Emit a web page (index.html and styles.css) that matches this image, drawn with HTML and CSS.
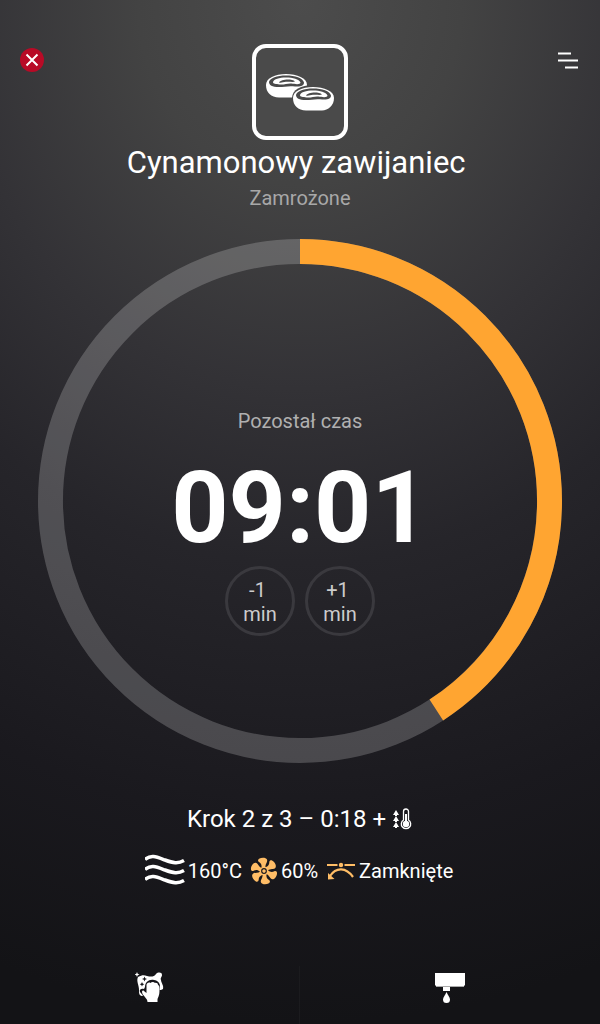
FILE: index.html
```html
<!DOCTYPE html>
<html lang="pl">
<head>
    <meta charset="UTF-8">
    <meta name="viewport" content="width=device-width, initial-scale=1.0">
    <title>Cynamonowy zawijaniec</title>
    <link rel="stylesheet" href="styles.css">
</head>
<body>
    <header class="header">
        <button class="icon-btn close-btn" type="button" aria-label="Zamknij">
            <svg width="24" height="24" viewBox="0 0 24 24">
                <circle cx="12" cy="12" r="12" fill="#b80a26"/>
                <path d="M6.5 6.5l11 11M17.5 6.5l-11 11" stroke="#fff" stroke-width="2"/>
            </svg>
        </button>
        <div class="product-icon">
            <svg width="70" height="38" viewBox="0 0 70 38">
                <g id="bun">
                    <path d="M1 12C1 5 10 1 21 1s21 4 21 11c0 8-6 12-12 12.500H14C6 24 1 20 1 12z" fill="#fff"/>
                    <path d="M4 9C5 5 12 2.500 21 2.500S38 5 39 9.500c0 3-3 4.500-9 4-6-1-11 .5-16 .5-7 0-10-2-10-5z" fill="#4a4a4a"/>
                    <path d="M8 9c1-3 6-4.500 13-4.500S34 6 35.500 9.500c0 2.500-6 1.500-9 1-4-.5-7 1.500-12 1C11 11 8 11 8 9z" fill="#fff"/>
                    <path d="M14 9.500C16 6 27 5.500 30 8.500c-2 1-6-.2-9 .3s-5 1.200-7 .7z" fill="#4a4a4a"/>
                </g>
                <path d="M27 25C27 17 36 12 48 12s22 5 22 13c0 9-6 13-12 13H41c-8 0-14-5-14-13z" fill="#4a4a4a"/>
                <use href="#bun" x="27" y="13"/>
            </svg>
        </div>
        <button class="icon-btn menu-btn" type="button" aria-label="Menu">
            <svg width="20" height="24" viewBox="0 0 20 24">
                <path d="M0 5.500h13M0 12.500h20M7 19.500h13" stroke="#fff" stroke-width="2"/>
            </svg>
        </button>
    </header>

    <main class="main">
        <h1 class="title">Cynamonowy zawijaniec&nbsp;</h1>
        <p class="subtitle">Zamrożone</p>

        <section class="timer">
            <svg class="timer-ring" viewBox="0 0 525 525">
                <circle class="ring-track" cx="262.5" cy="262.5" r="250"/>
                <circle class="ring-value" cx="262.5" cy="262.5" r="250" pathLength="1000" stroke-dasharray="408 1000" transform="rotate(-90 262.5 262.5)"/>
            </svg>
            <div class="timer-content">
                <p class="timer-label">Pozostał czas</p>
                <p class="timer-time">09:01</p>
                <div class="timer-buttons">
                    <button class="round-btn" type="button">-1&nbsp;<br>min</button>
                    <button class="round-btn" type="button">+1&nbsp;<br>min</button>
                </div>
            </div>
        </section>

        <p class="step">
            Krok 2 z 3 – 0:18 +
            <svg width="20" height="22" viewBox="0 0 20 22">
                <path d="M0 7l3-5 3 5zM2 7h2v1H2zM0 13l3-5 3 5zM2 13h2v1H2zM0 19l3-5 3 5zM2 19h2v1H2z" fill="#fff"/>
                <path d="M10.500 12V3.500a2.500 2.500 0 0 1 5 0V12a4.700 4.700 0 1 1-5 0z" fill="none" stroke="#fff" stroke-width="1.300"/>
                <circle cx="13" cy="16" r="3.200" fill="#fff"/>
                <path d="M13 6v10" stroke="#fff" stroke-width="2"/>
            </svg>
        </p>

        <ul class="params">
            <li>
                <svg width="40" height="34" viewBox="1 0 40 34">
                    <g fill="none" stroke="#fff" stroke-width="3.500">
                        <path d="M1 5.500C7 0 13 3 21 6s13 4 19 .5"/>
                        <path d="M1 15.500c6-5.500 12-2.500 20 .5s13 4 19 .5"/>
                        <path d="M1 25.500c6-5.500 12-2.500 20 .5s13 4 19 .5"/>
                    </g>
                </svg>
                160°C
            </li>
            <li>
                <svg width="28" height="28" viewBox="-14 -14 28 28">
                    <g fill="#ffbd66">
                        <path id="blade" d="M-2.500-3C-2-6-3-8-5-9c-1.500-1-1-2.500 0-3.200C-2-14 2-13.500 3-11.500 4-9 1-7 1.500-3.500z"/>
                        <use href="#blade" transform="rotate(60)"/>
                        <use href="#blade" transform="rotate(120)"/>
                        <use href="#blade" transform="rotate(180)"/>
                        <use href="#blade" transform="rotate(240)"/>
                        <use href="#blade" transform="rotate(300)"/>
                        <circle r="4.200"/>
                    </g>
                    <circle r="2.300" fill="none" stroke="#1c1b20" stroke-width="1.200"/>
                </svg>
                60%
            </li>
            <li>
                <svg width="30" height="20" viewBox="0 0 30 20">
                    <path d="M1 4h10.500M18.500 4H29" stroke="#ffbd66" stroke-width="2"/>
                    <circle cx="15" cy="4" r="2.200" fill="#ffbd66"/>
                    <path d="M4 15C10 6 20 6 27 16" fill="none" stroke="#ffbd66" stroke-width="2.200"/>
                    <path d="M2 12v6.500l6.500-.5z" fill="#ffbd66"/>
                </svg>
                Zamknięte
            </li>
        </ul>
    </main>

    <footer class="footer">
        <button class="footer-btn" type="button" aria-label="Czyszczenie">
            <svg width="30" height="32" viewBox="0 0 30 32">
                <path d="M3 5c4-2 6-2 9-1 4 1 7 1 9-2 2-2 6-2 6 1 0 2-2 3-1 5 0 3 3 5 2 9-1 1-3 1-5 1L9 19c-1 2 0 5-2 5-3-.5-3-3-3-6 0-5-3-9-1-13z" fill="#fff"/>
                <path d="M10 15c0-5 4-8 9-7 4 .5 6 3 6 7l-1 9-1.500 7H12l-1-4-6-7c-1-2 1-4 4-3z" fill="#151418"/>
                <path d="M12.500 30c0-4-5-6-5.500-10 0-1.800 1.800-2 2.500-.5l2 1.500V13c0-2 2.500-3 4-2 1-1.200 3.500-1.200 4.500 0 1.500-.5 3 .5 3 2 1.200.3 1.500 1.500 1.500 3 0 5 0 7-2 11v3z" fill="#fff"/>
                <path d="M2 0l.7 1.800 1.800.7-1.800.7L2 5l-.7-1.800L-.5 2.500l1.800-.7z" fill="#fff"/>
                <path d="M9.500 4.500l.7 1.800 1.800.7-1.800.7-.7 1.800-.7-1.800L7 7l1.800-.7zM7 10l.7 1.600 1.600.7-1.600.7L7 14.600 6.300 13l-1.600-.7 1.600-.7z" fill="#151418"/>
            </svg>
        </button>
        <button class="footer-btn" type="button" aria-label="Woda">
            <svg width="30" height="32" viewBox="0 0 30 32">
                <path d="M0 1h30v12l-2 2H2l-2-2zM8 15h7v4H8z" fill="#fff"/>
                <path d="M1 14.500h28" stroke="#aaa" stroke-width="1"/>
                <path d="M11.500 20c1 3 3.500 5 3.500 7.500a3.500 3.500 0 0 1-7 0c0-2.500 2.500-4.500 3.500-7.500z" fill="#fff"/>
            </svg>
        </button>
    </footer>
</body>
</html>
```

FILE: styles.css
```css
* {
    box-sizing: border-box;
}

body {
    margin: 0;
    min-height: 100vh;
    display: flex;
    flex-direction: column;
    font-family: Roboto, sans-serif;
    color: #fff;
    background: radial-gradient(ellipse 150% 100% at 50% 0%, #4c4c4c 0%, #434343 18%, #333236 38%, #26252a 55%, #1a191e 80%, #131316 100%);
}

h1,
p,
ul {
    margin: 0;
    padding: 0;
    font-weight: 400;
}

svg {
    display: block;
    flex: none;
}

button {
    padding: 0;
    border: none;
    background: none;
    color: inherit;
    font-family: inherit;
    cursor: pointer;
}

.header {
    display: grid;
    grid-template-columns: 1fr auto 1fr;
    align-items: start;
    padding: 44px 20px 0;
}

.icon-btn {
    margin-top: 4px;
}

.close-btn {
    justify-self: start;
}

.menu-btn {
    justify-self: end;
    margin-right: 2px;
}

.product-icon {
    width: 96px;
    height: 96px;
    display: flex;
    align-items: center;
    justify-content: center;
    border: 4px solid #fff;
    border-radius: 14px;
    background: #4a4a4a;
}

.main {
    flex: 1;
    display: flex;
    flex-direction: column;
    align-items: center;
}

.title {
    margin-top: 4px;
    font-size: 31px;
    line-height: 38px;
}

.subtitle {
    margin-top: 4px;
    font-size: 20px;
    line-height: 24px;
    color: #a8a8a8;
}

/* ring and its content share one grid cell */
.timer {
    display: grid;
    place-items: center;
    width: 100%;
    margin-top: 29px;
    padding: 0 38px;
}

.timer-ring,
.timer-content {
    grid-area: 1 / 1;
}

.timer-ring {
    width: 100%;
}

.ring-track,
.ring-value {
    fill: none;
    stroke-width: 25;
}

.ring-track {
    stroke: rgba(255, 255, 255, 0.2);
}

.ring-value {
    stroke: #ffa531;
}

.timer-content {
    display: flex;
    flex-direction: column;
    align-items: center;
    padding-top: 42px;
}

.timer-label {
    font-size: 20px;
    line-height: 24px;
    color: #b0b0b0;
}

.timer-time {
    margin-top: 17px;
    font-size: 100px;
    font-weight: 700;
    line-height: 116px;
}

.timer-buttons {
    display: flex;
    gap: 10px;
}

.round-btn {
    width: 70px;
    height: 70px;
    padding-top: 2px;
    border: 3px solid #3a393e;
    border-radius: 50%;
    font-size: 20px;
    line-height: 24px;
    color: #ccc;
}

.step {
    display: flex;
    align-items: center;
    gap: 7px;
    margin-top: 42px;
    font-size: 24px;
    line-height: 28px;
}

.params {
    display: flex;
    gap: 8px;
    margin-top: 21px;
    padding-right: 2px;
    font-size: 20px;
    line-height: 34px;
    list-style: none;
}

.params li {
    display: flex;
    align-items: center;
    gap: 3px;
}

.footer {
    display: grid;
    grid-template-columns: 1fr 1fr;
    height: 58px;
}

.footer-btn {
    display: flex;
    align-items: flex-start;
    justify-content: center;
    padding-top: 6px;
}

.footer-btn:first-child {
    border-right: 1px solid #1b1b1e;
}
```
